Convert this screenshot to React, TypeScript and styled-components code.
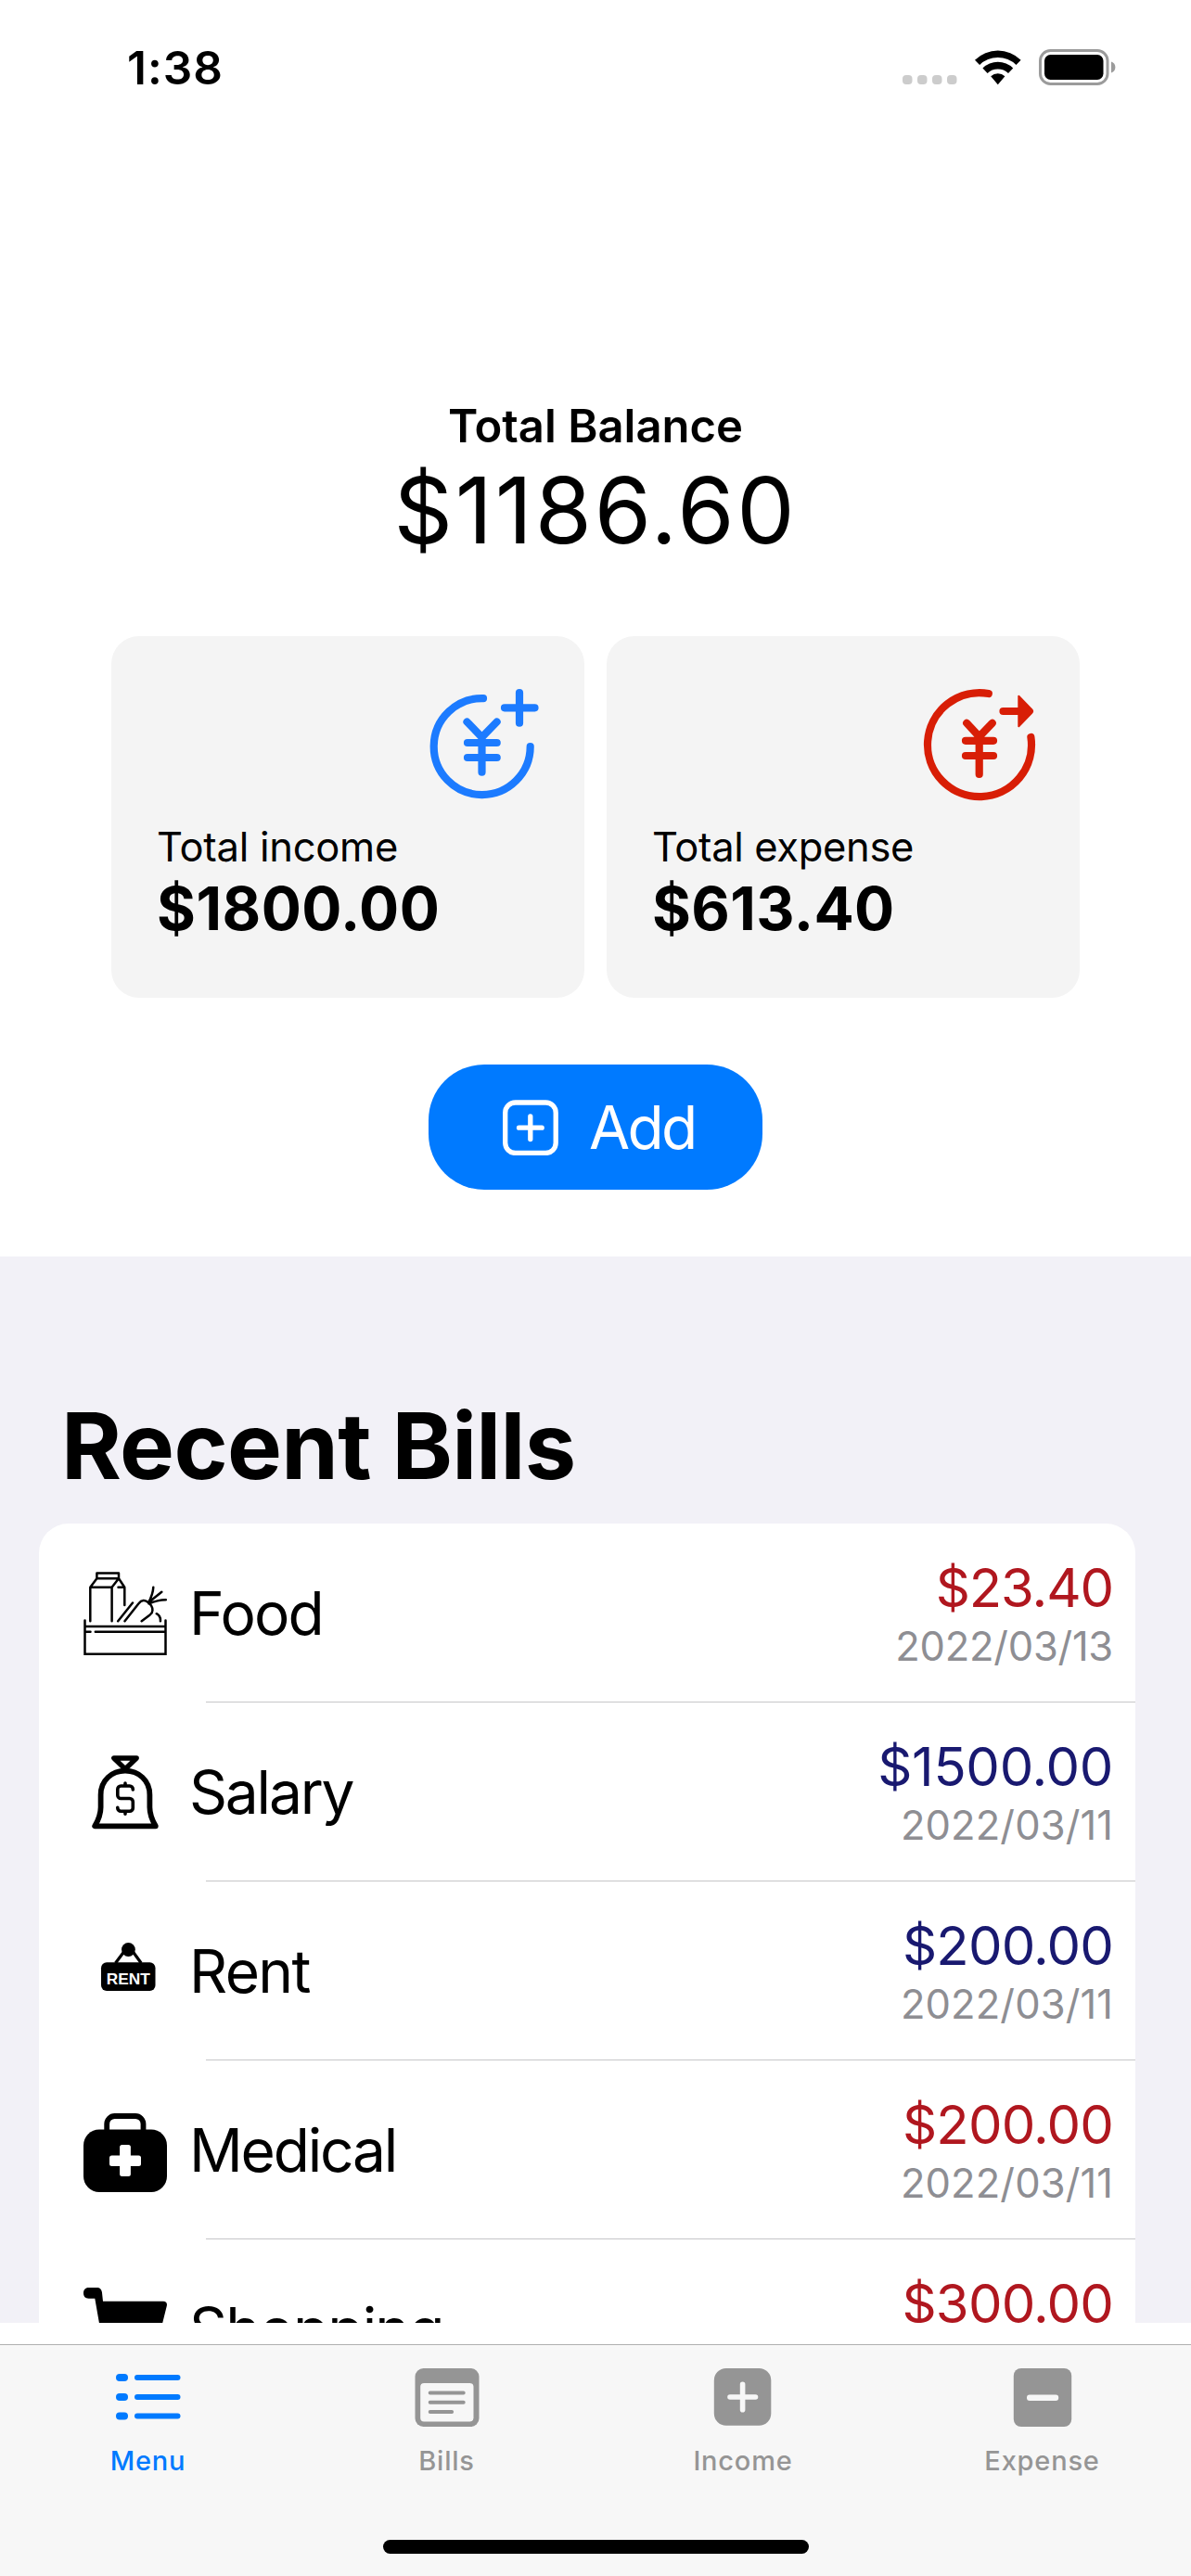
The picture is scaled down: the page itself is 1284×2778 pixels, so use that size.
import React from "react";
import styled, { createGlobalStyle } from "styled-components";

const GlobalStyle = createGlobalStyle`
  * { box-sizing: border-box; }
  body { margin: 0; background: #ffffff; }
`;

const Screen = styled.div`
  display: flex;
  flex-direction: column;
  width: 1284px;
  height: 2778px;
  overflow: hidden;
  background: #ffffff;
  color: #000000;
  font-family: Inter, "Liberation Sans", sans-serif;
`;

/* One line of type; $track is the letter spacing in pixels. */
const Type = styled.div<{
  $size: number;
  $line: number;
  $weight?: number;
  $track?: number;
  $color?: string;
}>`
  font-size: ${(p) => p.$size}px;
  line-height: ${(p) => p.$line}px;
  font-weight: ${(p) => p.$weight ?? 400};
  letter-spacing: ${(p) => p.$track ?? 0}px;
  color: ${(p) => p.$color ?? "inherit"};
  white-space: nowrap;
`;

const StatusBar = styled.header`
  display: flex;
  justify-content: space-between;
  align-items: flex-start;
  height: 141px;
  padding: 43px 80px 0 137px;
`;

const StatusIcons = styled.svg`
  width: 232px;
  height: 42px;
  margin-top: 9px;
`;

const Summary = styled.section`
  display: flex;
  flex-direction: column;
  align-items: center;
  height: 1214px;
  padding-top: 289px;
`;

const Cards = styled.div`
  display: flex;
  gap: 24px;
  margin-top: 75px;
`;

const Card = styled.div`
  display: flex;
  flex-direction: column;
  width: 510px;
  height: 390px;
  padding: 54px 45px 0 49px;
  border-radius: 30px;
  background: #f4f4f4;
`;

const CardIcon = styled.svg`
  width: 130px;
  height: 130px;
  margin-bottom: 16px;
  align-self: flex-end;
  fill: none;
  stroke: currentColor;
  stroke-width: 8.2px;
  stroke-linecap: round;
`;

const AddButton = styled.button`
  display: flex;
  align-items: center;
  gap: 33px;
  width: 360px;
  height: 135px;
  margin-top: 72px;
  padding: 0 0 0 80px;
  border: 0;
  border-radius: 60px;
  background: #007aff;
  color: #ffffff;
  font-family: inherit;
`;

const Recent = styled.section`
  height: 1150px;
  padding: 144px 60px 0 42px;
  overflow: hidden;
  background: #f2f1f7;
`;

const RecentTitle = styled.div`
  padding-left: 24px;
  margin-bottom: 24px;
`;

const BillList = styled.div`
  border-radius: 32px 32px 0 0;
  background: #ffffff;
`;

const BillRow = styled.div`
  display: flex;
  align-items: center;
  height: 192px;
  padding: 1px 24px 0 48px;
`;

const BillIcon = styled.svg`
  width: 90px;
  height: 90px;
  margin: 1px 24px 0 0;
  flex: none;
`;

const BillFigures = styled.div`
  display: flex;
  flex-direction: column;
  align-items: flex-end;
  gap: 1px;
  margin-left: auto;
`;

const Separator = styled.div`
  height: 1px;
  margin-left: 180px;
  background: #c6c6c8;
`;

const TabBar = styled.nav`
  display: grid;
  grid-template-columns: repeat(4, 321px);
  grid-template-rows: 210px 15px;
  height: 250px;
  margin-top: 23px;
  border-top: 1px solid #b0b0b0;
  background: #f7f7f7;
`;

const Tab = styled.div<{ $active?: boolean; $inset?: number }>`
  display: flex;
  flex-direction: column;
  align-items: center;
  padding: 20px ${(p) => p.$inset ?? 0}px 0 0;
  color: ${(p) => (p.$active ? "#007aff" : "#959595")};
`;

const TabIcon = styled.svg`
  width: 72px;
  height: 72px;
  margin-bottom: 15px;
`;

const HomeIndicator = styled.div`
  grid-column: 1 / -1;
  justify-self: center;
  width: 459px;
  height: 15px;
  border-radius: 8px;
  background: #000000;
`;

const FoodIcon = () => (
  <BillIcon viewBox="0 0 90 90" fill="none" stroke="#000" strokeWidth="2.5" strokeLinecap="round" strokeLinejoin="round">
    <path d="M14.4 7.3V1.5H38v5.800H14.4L7.3 16.7H30.6L38 7.3l6.300 9.400M37.5 16.7h6.800M7.3 16.7v36.600M30.6 16.7v36.600M44.3 16.700v19.200" />
    <path d="M53 33.500 37.200 53.300M44.500 53.300 59.500 34.300c3-4 7-4.300 10.500-1 3.500 2.700 4.500 5.700 4.400 8.400 0 2-1 3.300-2.700 4.700L62.700 53.300M70 33.300c3-5.500 5-10.500 5.300-16.600M70 33.300 84.300 21.700M70.500 34.500c6-2.600 12-4.100 18.300-4.200M78.700 45.200c3 1.500 4.500 4.300 4.200 8.100" />
    <path d="M1.500 52.500v36.200H88.500V52.500M1.500 59H88.500M1.500 64.700H7.500M12.800 64.700H88.500" strokeLinejoin="miter" />
  </BillIcon>
);

const SalaryIcon = () => (
  <BillIcon viewBox="0 0 90 90" fill="none" stroke="#000" strokeLinecap="round" strokeLinejoin="round">
    <path strokeWidth="5.4" d="M32.800 8H57.200L45 19.800Z" />
    <path strokeWidth="5.800" d="M12.200 81.300H77.800C73.500 74 71.400 68 71.400 61V47.500C71.400 32 59.500 21.600 45 21.600S18.600 32 18.600 47.500V61C18.600 68 16.500 74 12.200 81.300Z" />
    <path strokeWidth="3.600" d="M53.300 42V41.500a3.500 3.500 0 0 0-3.500-3.500H40.300a3.500 3.500 0 0 0-3.500 3.500V48a3.500 3.500 0 0 0 3.500 3.500h9.500a3.500 3.500 0 0 1 3.500 3.500v6.700a3.500 3.500 0 0 1-3.500 3.500H40.300a3.500 3.500 0 0 1-3.500-3.500V61.200M45 35V38M45 65.200V68.200" />
  </BillIcon>
);

const RentIcon = () => (
  <BillIcon viewBox="0 0 90 90">
    <path d="M34.500 36 45 22M62.200 36 52 22" stroke="#000" strokeWidth="3.200" />
    <circle cx="48.400" cy="21.500" r="7.400" />
    <rect x="19" y="35.300" width="58.500" height="30.700" rx="6" />
    <text x="48.200" y="58.500" textAnchor="middle" fill="#fff" fontFamily="Liberation Sans, sans-serif" fontWeight="700" fontSize="17.300">
      RENT
    </text>
  </BillIcon>
);

const MedicalIcon = () => (
  <BillIcon viewBox="0 0 90 90">
    <path d="M25.200 26V16.500a8.500 8.500 0 0 1 8.500-8.500H56a8.500 8.500 0 0 1 8.500 8.500V26" fill="none" stroke="#000" strokeWidth="5.800" />
    <rect y="22.500" width="90" height="67.500" rx="17" />
    <rect x="39.100" y="39" width="11.800" height="34" rx="2.500" fill="#fff" />
    <rect x="28" y="50.500" width="34" height="11.600" rx="2.500" fill="#fff" />
  </BillIcon>
);

const ShoppingIcon = () => (
  <BillIcon viewBox="0 0 90 90">
    <path d="M5.500 0H14c4 0 5.600 2 6 5.500l1 9.200H86c3 0 4.500 2 3.800 5L82.500 49c-1.500 6-5 8-10 8H30c-7 0-10.500-3-11.500-10L12.300 11.700H5.500C2 11.700 0 9.500 0 6S2 0 5.500 0Z" />
    <circle cx="32" cy="78" r="8" />
    <circle cx="70" cy="78" r="8" />
  </BillIcon>
);

const RED = "#b0171f";
const NAVY = "#191970";

const bills = [
  { name: "Food", track: -1.8, amount: "$23.40", amountTrack: -1.1, color: RED, date: "2022/03/13", dateTrack: -0.25, Icon: FoodIcon },
  { name: "Salary", track: -2.2, amount: "$1500.00", amountTrack: -0.3, color: NAVY, date: "2022/03/11", dateTrack: 0.1, Icon: SalaryIcon },
  { name: "Rent", track: -1.6, amount: "$200.00", amountTrack: -0.8, color: NAVY, date: "2022/03/11", dateTrack: 0.1, Icon: RentIcon },
  { name: "Medical", track: -2.2, amount: "$200.00", amountTrack: -0.8, color: RED, date: "2022/03/11", dateTrack: 0.1, Icon: MedicalIcon },
  { name: "Shopping", track: -1.8, amount: "$300.00", amountTrack: -0.8, color: RED, date: "2022/03/11", dateTrack: 0.1, Icon: ShoppingIcon },
];

export default function App() {
  return (
    <Screen>
      <GlobalStyle />
      <StatusBar>
        <Type $size={49.5} $line={60} $weight={600} $track={1}>1:38</Type>
        <StatusIcons viewBox="972 52 232 42">
          <g fill="#cccccc">
            <rect x="973" y="81" width="10.500" height="10" rx="4" />
            <rect x="989" y="81" width="10.500" height="10" rx="4" />
            <rect x="1005" y="81" width="10.500" height="10" rx="4" />
            <rect x="1021" y="81" width="10.500" height="10" rx="4" />
          </g>
          <path d="M1051 64.700a35.500 35.500 0 0 1 49.600 0l-5.100 5.300a28.200 28.200 0 0 0-39.400 0ZM1059.400 73.500a23.600 23.600 0 0 1 32.800 0l-5.200 5.400a16.200 16.200 0 0 0-22.400 0ZM1068.200 82.300a11 11 0 0 1 15.200 0l-7.600 8.900Z" />
          <rect x="1121.500" y="54.500" width="72.500" height="36" rx="11" fill="none" stroke="#9b9b9b" strokeWidth="3" />
          <rect x="1126" y="59" width="63.500" height="27" rx="6.500" />
          <path d="M1198 66.500c3 1 4.400 3 4.400 6s-1.400 5-4.400 6Z" fill="#9b9b9b" />
        </StatusIcons>
      </StatusBar>

      <Summary>
        <Type $size={49} $line={60} $weight={600} $track={0}>Total Balance</Type>
        <Type $size={99} $line={121} $track={2.7}>$1186.60</Type>

        <Cards>
          <Card>
            <CardIcon viewBox="455 740 130 130" color="#1c7bff">
              <path d="M521 753.100A52 52 0 1 0 571.700 805M544 763.300H576.500M560 747V779.700M503.500 778.500 519.500 795 535.600 778.500M504 801H535.700M504 817H535.700M519.500 795V832.700" />
            </CardIcon>
            <Type $size={43.5} $line={54} $track={-0.25}>Total income</Type>
            <Type $size={64} $line={80} $weight={700} $track={0.5}>$1800.00</Type>
          </Card>
          <Card>
            <CardIcon viewBox="989 740 130 130" color="#d81e06">
              <path d="M1065.800 748A56 56 0 1 0 1111.400 795M1081.500 767H1098M1042.200 779.800 1055.700 794.400 1069.700 779.800M1041 798.800H1071M1041 815H1071M1055.700 794.400V835" />
              <path d="M1098.300 750.800V783.200L1112.300 768.800Q1114 767 1112.300 765.200Z" fill="currentColor" strokeWidth="2" style={{ strokeWidth: 2 }} strokeLinejoin="round" />
            </CardIcon>
            <Type $size={43.5} $line={54} $track={-0.35}>Total expense</Type>
            <Type $size={64} $line={80} $weight={700} $track={0.4}>$613.40</Type>
          </Card>
        </Cards>

        <AddButton>
          <svg width="60" height="60" viewBox="0 0 60 60" fill="none" stroke="#fff" strokeWidth="5.300" strokeLinecap="round">
            <rect x="2.700" y="3" width="54.500" height="54.500" rx="11" />
            <path d="M17.500 30.200H42.200M29.800 17.900V42.500" />
          </svg>
          <Type $size={64} $line={78} $track={-2.7}>Add</Type>
        </AddButton>
      </Summary>

      <Recent>
        <RecentTitle>
          <Type $size={99} $line={120} $weight={700} $track={-0.7}>Recent Bills</Type>
        </RecentTitle>
        <BillList>
          {bills.map(({ name, track, amount, amountTrack, color, date, dateTrack, Icon }) => (
            <React.Fragment key={name}>
              <BillRow>
                <Icon />
                <Type $size={64} $line={78} $track={track}>{name}</Type>
                <BillFigures>
                  <Type $size={58} $line={70} $track={amountTrack} $color={color}>{amount}</Type>
                  <Type $size={43.5} $line={54} $track={dateTrack} $color="#8e8e93">{date}</Type>
                </BillFigures>
              </BillRow>
              <Separator />
            </React.Fragment>
          ))}
        </BillList>
      </Recent>

      <TabBar>
        <Tab $active $inset={2}>
          <TabIcon viewBox="124 2549 72 72" fill="currentColor">
            <rect x="125" y="2560" width="13" height="8" rx="4" />
            <rect x="125" y="2581" width="13" height="8" rx="4" />
            <rect x="125" y="2601.500" width="13" height="8" rx="4" />
            <rect x="145" y="2561" width="49.500" height="6" rx="3" />
            <rect x="145" y="2582" width="49.500" height="6" rx="3" />
            <rect x="145" y="2602.500" width="49.500" height="6" rx="3" />
          </TabIcon>
          <Type $size={29} $line={36} $weight={500} $track={0.8}>Menu</Type>
        </Tab>
        <Tab>
          <TabIcon viewBox="445.500 2549 72 72">
            <rect x="447" y="2554" width="69" height="63" rx="9" fill="currentColor" />
            <rect x="452.700" y="2570" width="57.300" height="41.400" rx="4" fill="#f7f7f7" />
            <path d="M463.200 2580.400H499.200M463.200 2590.700H499.200M463.200 2601H486.600" stroke="currentColor" strokeWidth="4" strokeLinecap="round" />
          </TabIcon>
          <Type $size={29} $line={36} $weight={500} $track={0.8}>Bills</Type>
        </Tab>
        <Tab $inset={3}>
          <TabIcon viewBox="765.500 2549 72 72">
            <rect x="770.300" y="2554" width="61.500" height="61.700" rx="13" fill="currentColor" />
            <path d="M787.500 2585H815M801.100 2571.300V2598.700" stroke="#f7f7f7" strokeWidth="5.600" strokeLinecap="round" />
          </TabIcon>
          <Type $size={29} $line={36} $weight={500} $track={0.8}>Income</Type>
        </Tab>
        <Tab>
          <TabIcon viewBox="1087.500 2549 72 72">
            <rect x="1092.300" y="2554" width="62.400" height="63" rx="8" fill="currentColor" />
            <rect x="1106.500" y="2582.400" width="34.200" height="6.600" rx="3" fill="#f7f7f7" />
          </TabIcon>
          <Type $size={29} $line={36} $weight={500} $track={0.8}>Expense</Type>
        </Tab>
        <HomeIndicator />
      </TabBar>
    </Screen>
  );
}
